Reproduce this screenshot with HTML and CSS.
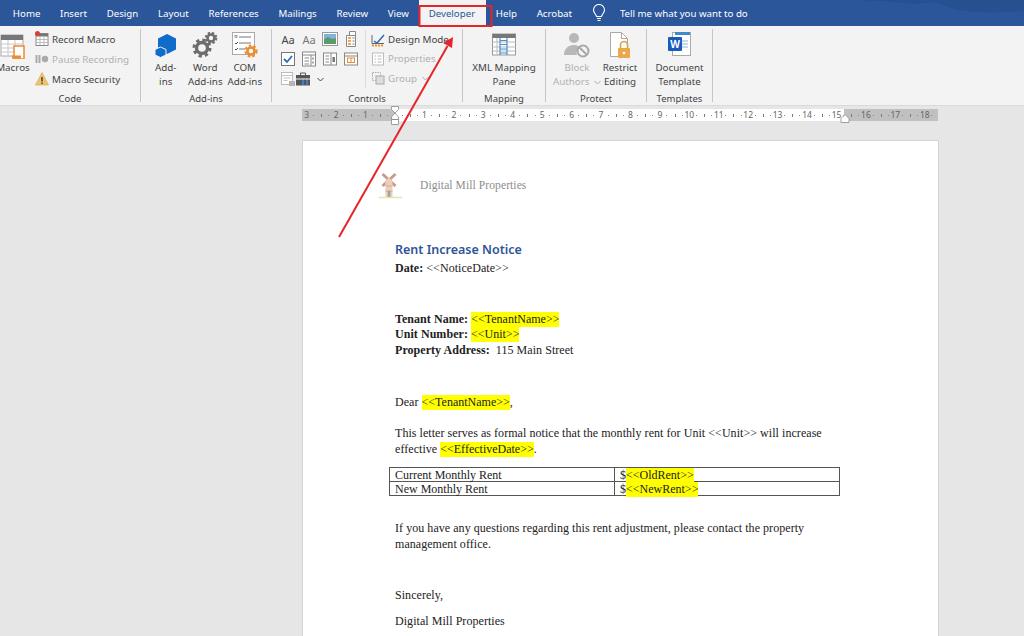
FILE: index.html
```html
<!DOCTYPE html>
<html lang="en">
<head>
    <meta charset="UTF-8">
    <meta name="viewport" content="width=device-width, initial-scale=1.0">
    <title>Rent Increase Notice - Word</title>
    <link rel="stylesheet" href="styles.css">
</head>
<body>
    <!-- tab strip -->
    <nav class="tabs">
        <a class="tab">Home</a>
        <a class="tab">Insert</a>
        <a class="tab">Design</a>
        <a class="tab">Layout</a>
        <a class="tab">References</a>
        <a class="tab">Mailings</a>
        <a class="tab">Review</a>
        <a class="tab">View</a>
        <a class="tab tab-active">Developer</a>
        <a class="tab">Help</a>
        <a class="tab">Acrobat</a>
        <svg class="bulb" width="14" height="18" viewBox="0 0 14 18"><path d="M4.5 12.5C4 10 1.5 9 1.5 6a5.5 5.5 0 0 1 11 0c0 3-2.500 4-3 6.500z" fill="none" stroke="#fff" stroke-width="1.1"/><path d="M5 14.500h4M5.500 16.500h3" stroke="#fff" stroke-width="1.100"/></svg>
        <span class="tell-me">Tell me what you want to do</span>
        <svg class="waves" width="160" height="26" viewBox="0 0 160 26"><path d="M0 2C20-2 40 6 60 3c20-3 20 6 40 8s40 2 60 0V0H0z" fill="#26508f"/></svg>
    </nav>

    <!-- ribbon -->
    <div class="ribbon">
        <section class="group group-code">
            <div class="group-body">
                <div class="big big-macros">
                    <svg class="big-icon" width="28" height="28" viewBox="0 0 28 28"><rect x="1" y="4" width="22" height="21" fill="#fff" stroke="#aaa"/><rect x="1" y="4" width="22" height="5" fill="#777"/><path d="M1 13h22M1 17h22M1 21h22M8 9v16M15 9v16" stroke="#c8c8c8"/><rect x="14" y="15" width="10" height="13" fill="#fff" stroke="#ed8b2f" stroke-width="1.500"/><path d="M12 26h9" stroke="#ed8b2f" stroke-width="3"/></svg>
                    <span>Macros</span>
                </div>
                <div class="small-list">
                    <div class="small">
                        <svg width="14" height="16" viewBox="0 0 14 16"><rect x="1" y="2.500" width="12" height="12" fill="#fff" stroke="#888"/><rect x="1" y="2.500" width="12" height="3" fill="#777"/><path d="M1 8.500h12M1 11.500h12M5 5v9M9 5v9" stroke="#bbb"/><circle cx="2.500" cy="2.500" r="2.500" fill="#d8412f"/></svg>
                        <span>Record Macro</span>
                    </div>
                    <div class="small is-off">
                        <svg width="14" height="16" viewBox="0 0 14 16"><path d="M1.500 4v8M4.500 4v8" stroke="#aaa" stroke-width="2"/><circle cx="10" cy="8" r="3.200" fill="#aaa"/></svg>
                        <span>Pause Recording</span>
                    </div>
                    <div class="small">
                        <svg width="14" height="16" viewBox="0 0 14 16"><path d="M7 1.500 13.500 14H.500z" fill="#f0c36d" stroke="#d9a441" stroke-width=".6"/><path d="M7 6v4.500M7 11.500v1.500" stroke="#444" stroke-width="1.500"/></svg>
                        <span>Macro Security</span>
                    </div>
                </div>
            </div>
            <div class="group-label">Code</div>
        </section>

        <section class="group group-addins">
            <div class="group-body">
                <div class="big big-narrow">
                    <svg class="big-icon" width="24" height="28" viewBox="0 0 24 28"><path d="M13 3l9 4.500v11L13 23l-9-4.500v-11z" fill="#0f6cc8"/><path d="M6.500 16l5.500 2.500V24l-5.500 2.500L1 24v-5.500z" fill="#0f6cc8" stroke="#f3f3f3"/></svg>
                    <span>Add-<br>ins</span>
                </div>
                <div class="big big-narrow">
                    <svg class="big-icon" width="26" height="28" viewBox="0 0 26 28"><circle cx="10" cy="17" r="5.500" fill="none" stroke="#6d6d6d" stroke-width="3.400"/><circle cx="10" cy="17" r="8" fill="none" stroke="#6d6d6d" stroke-width="3" stroke-dasharray="3.300 3"/><circle cx="19" cy="7" r="3.500" fill="none" stroke="#6d6d6d" stroke-width="2.600"/><circle cx="19" cy="7" r="5.300" fill="none" stroke="#6d6d6d" stroke-width="2" stroke-dasharray="2.400 1.800"/></svg>
                    <span>Word<br>Add-ins</span>
                </div>
                <div class="big big-narrow">
                    <svg class="big-icon" width="28" height="28" viewBox="0 0 28 28"><rect x="1.500" y="1.500" width="22" height="22" fill="#fff" stroke="#aaa"/><path d="M8 6h12M8 12h12M8 18h6" stroke="#777"/><rect x="4" y="4.500" width="2" height="2" fill="none" stroke="#777" stroke-width=".7"/><path d="M4 12l1 1 2-2M4 18l1 1 2-2" fill="none" stroke="#4a4a4a"/><circle cx="20" cy="20" r="3.500" fill="none" stroke="#ed8b2f" stroke-width="2.600"/><circle cx="20" cy="20" r="5.500" fill="none" stroke="#ed8b2f" stroke-width="2.200" stroke-dasharray="2.500 2.100"/></svg>
                    <span>COM<br>Add-ins</span>
                </div>
            </div>
            <div class="group-label">Add-ins</div>
        </section>

        <section class="group group-controls">
            <div class="group-body">
                <div class="control-grid">
                    <span class="aa">Aa</span>
                    <span class="aa aa-light">Aa</span>
                    <svg width="16" height="16" viewBox="0 0 16 16"><rect x=".500" y="1.500" width="15" height="13" fill="#fff" stroke="#999"/><rect x="2" y="3" width="12" height="5" fill="#7fb3de"/><path d="M2 8l4-2 4 2 4-1v6H2z" fill="#5c9a6c"/></svg>
                    <svg width="16" height="16" viewBox="0 0 16 16"><path d="M6.500.500h6v4h-6zM3.500 4.500h9v11h-9z" fill="#fff" stroke="#888"/><path d="M5 7h3M5 10h3M5 13h3" stroke="#ed8b2f" stroke-width="1.500"/><path d="M9.500 7h2M9.500 10h2M9.500 13h2" stroke="#777"/></svg>
                    <svg width="16" height="16" viewBox="0 0 16 16"><rect x="1.500" y="1.500" width="13" height="13" fill="#fff" stroke="#777"/><path d="M4 8l3 3 5-6" fill="none" stroke="#2b6cb8" stroke-width="1.800"/></svg>
                    <svg width="16" height="16" viewBox="0 0 16 16"><rect x="1.500" y="1" width="13" height="14" fill="#fff" stroke="#888"/><path d="M1.500 4h13M10 4v11M3.500 7h4.500M3.500 10h4.500M3.500 13h4.500" stroke="#888"/><path d="M12 6.500v2M12 10.500v2" stroke="#555"/></svg>
                    <svg width="16" height="16" viewBox="0 0 16 16"><rect x="1.500" y="2" width="13" height="12" fill="#fff" stroke="#888"/><path d="M9 2v12M3.500 5h3.500M3.500 8h3.500M3.500 11h3.500" stroke="#888"/><rect x="10.500" y="6" width="2.500" height="5" fill="#777"/></svg>
                    <svg width="16" height="16" viewBox="0 0 16 16"><rect x="1.500" y="2" width="13" height="12" fill="#fff" stroke="#888"/><path d="M1.500 5h13" stroke="#888"/><rect x="4.500" y="7" width="7" height="4.500" fill="#fff" stroke="#ed8b2f"/><path d="M8 7v4.500" stroke="#ed8b2f"/></svg>
                    <svg width="16" height="16" viewBox="0 0 16 16"><rect x="1.500" y="1.500" width="11" height="12" fill="#fff" stroke="#bbb"/><path d="M1.500 4.500h11M3.500 7h7M3.500 9.500h4" stroke="#c4c4c4"/><rect x="9" y="10" width="6" height="5" fill="#b5b5b5"/></svg>
                    <span class="tools">
                        <svg width="18" height="16" viewBox="0 0 18 16"><path d="M5.500 4V2h5v2" fill="none" stroke="#555"/><rect x="1" y="4" width="14" height="10.500" fill="#555"/><path d="M8 7v7M12 7v7" stroke="#3d8ad0" stroke-width="1.600"/><path d="M1 8h14" stroke="#f3f3f3"/></svg>
                        <svg class="chev" width="7" height="5" viewBox="0 0 7 5"><path d="M.5 1l3 3 3-3" fill="none" stroke="#444"/></svg>
                    </span>
                </div>
                <div class="small-list small-list-split">
                    <div class="small">
                        <svg width="14" height="16" viewBox="0 0 14 16"><path d="M1 3v8.500h12" fill="none" stroke="#666"/><path d="M3 9l3 2 7-8" fill="none" stroke="#2b6cb8" stroke-width="1.500"/><path d="M1 13.500h12" stroke="#ed8b2f" stroke-width="2" stroke-dasharray="2 1"/></svg>
                        <span>Design Mode</span>
                    </div>
                    <div class="small is-off">
                        <svg width="14" height="16" viewBox="0 0 14 16"><rect x="1.500" y="2" width="11" height="12" fill="#fff" stroke="#bbb"/><path d="M3.500 5h1.500M6.500 5h4M3.500 8h1.500M6.500 8h4M3.500 11h1.500M6.500 11h4" stroke="#bbb"/></svg>
                        <span>Properties</span>
                    </div>
                    <div class="small is-off">
                        <svg width="14" height="16" viewBox="0 0 14 16"><rect x="1.500" y="2.500" width="8" height="8" fill="none" stroke="#aaa" stroke-dasharray="1.500 1"/><rect x="5" y="6" width="8" height="8" fill="#ddd" stroke="#aaa"/></svg>
                        <span>Group</span>
                        <svg class="chev" width="7" height="5" viewBox="0 0 7 5"><path d="M.5 1l3 3 3-3" fill="none" stroke="#aaa"/></svg>
                    </div>
                </div>
            </div>
            <div class="group-label">Controls</div>
        </section>

        <section class="group group-mapping">
            <div class="group-body">
                <div class="big">
                    <svg class="big-icon" width="26" height="28" viewBox="0 0 26 28"><rect x="1.500" y="3" width="23" height="21" fill="#fff" stroke="#999"/><rect x="1.500" y="3" width="23" height="4" fill="#777"/><path d="M1.500 11h23M1.500 16h23M1.500 20h23M6 7v17" stroke="#bbb"/><path d="M9 7v17M9 9.500h7M9 13.500h7M9 18h7M9 22h7M16 7v17" fill="none" stroke="#4a90d0" stroke-width="1.200"/></svg>
                    <span>XML Mapping<br>Pane</span>
                </div>
            </div>
            <div class="group-label">Mapping</div>
        </section>

        <section class="group group-protect">
            <div class="group-body">
                <div class="big big-block is-off">
                    <svg class="big-icon" width="30" height="28" viewBox="0 0 30 28"><circle cx="12" cy="7" r="5" fill="#b8b8b8"/><path d="M2 24c0-6 4-10 10-10 3 0 5 1 6 2-3 2-4 5-3 8z" fill="#b8b8b8"/><circle cx="21" cy="20" r="5.500" fill="none" stroke="#a8a8a8" stroke-width="2"/><path d="M17 16l8 8" stroke="#a8a8a8" stroke-width="2"/></svg>
                    <span>Block<br>Authors <svg class="chev" width="7" height="5" viewBox="0 0 7 5"><path d="M.5 1l3 3 3-3" fill="none" stroke="#aaa"/></svg></span>
                </div>
                <div class="big big-restrict">
                    <svg class="big-icon" width="24" height="28" viewBox="0 0 24 28"><path d="M2.500 1.500h11l6 6v18h-17z" fill="#fff" stroke="#aaa"/><path d="M13.500 1.500v6h6" fill="none" stroke="#aaa"/><rect x="10" y="17" width="12" height="10" rx="1" fill="#e9a94a"/><path d="M12.500 17v-3a3.500 3.500 0 0 1 7 0v3" fill="none" stroke="#d9a441" stroke-width="1.600"/><circle cx="16" cy="22" r="1.300" fill="#fff"/></svg>
                    <span>Restrict<br>Editing</span>
                </div>
            </div>
            <div class="group-label">Protect</div>
        </section>

        <section class="group group-templates">
            <div class="group-body">
                <div class="big">
                    <svg class="big-icon" width="26" height="28" viewBox="0 0 26 28"><rect x="5.500" y="1.500" width="18" height="23" fill="#fff" stroke="#aaa"/><rect x="8" y="1" width="15" height="3" fill="#3d8ad0"/><path d="M15 10h6M15 13h6M15 16h6" stroke="#8ab4de"/><rect x="1" y="6" width="14" height="14" rx="1" fill="#185abd"/><text x="8" y="17" class="word-w">W</text></svg>
                    <span>Document<br>Template</span>
                </div>
            </div>
            <div class="group-label">Templates</div>
        </section>
    </div>

    <!-- document area -->
    <main class="workspace">
        <div class="ruler">
            <span class="mark">3</span><span class="mark">2</span><span class="mark">1</span><span class="mark"></span>
            <span class="mark">1</span><span class="mark">2</span><span class="mark">3</span><span class="mark">4</span><span class="mark">5</span><span class="mark">6</span>
            <span class="mark">7</span><span class="mark">8</span><span class="mark">9</span><span class="mark">10</span><span class="mark">11</span><span class="mark">12</span>
            <span class="mark">13</span><span class="mark">14</span><span class="mark">15</span><span class="mark">16</span><span class="mark">17</span><span class="mark">18</span>
        </div>

        <article class="page">
            <div class="letterhead">
                <svg class="logo" width="26" height="30" viewBox="0 0 26 30"><path d="M3.500 4 16.500 16M16.500 4 3.500 16" stroke="#c99a90" stroke-width="3"/><path d="M10 7 6.500 12v15h7V12z" fill="#eccfb6"/><path d="M6.500 16h7M6.500 21h7" stroke="#d5ad94"/><rect x="8.800" y="21" width="2.500" height="6" fill="#93a3ad"/><path d="M0 27.500h23" stroke="#dfe7b4" stroke-width="1.500"/></svg>
                <span class="company">Digital Mill Properties</span>
            </div>

            <h1 class="title">Rent Increase Notice</h1>
            <p class="line block-date"><b>Date:</b> &lt;&lt;NoticeDate&gt;&gt;</p>

            <div class="block-tenant">
                <p class="line"><b>Tenant Name:</b> <mark>&lt;&lt;TenantName&gt;&gt;</mark></p>
                <p class="line"><b>Unit Number:</b> <mark>&lt;&lt;Unit&gt;&gt;</mark></p>
                <p class="line"><b>Property Address:</b>&nbsp; 115 Main Street</p>
            </div>

            <p class="line block-dear">Dear <mark>&lt;&lt;TenantName&gt;&gt;</mark>,</p>
            <p class="line block-para">This letter serves as formal notice that the monthly rent for Unit &lt;&lt;Unit&gt;&gt; will increase effective <mark>&lt;&lt;EffectiveDate&gt;&gt;</mark>.</p>

            <table class="rent-table">
                <tr>
                    <td>Current Monthly Rent</td>
                    <td>$<mark>&lt;&lt;OldRent&gt;&gt;</mark></td>
                </tr>
                <tr>
                    <td>New Monthly Rent</td>
                    <td>$<mark>&lt;&lt;NewRent&gt;&gt;</mark></td>
                </tr>
            </table>

            <p class="line block-questions">If you have any questions regarding this rent adjustment, please contact the property management office.</p>
            <p class="line block-sincerely">Sincerely,</p>
            <p class="line block-sign">Digital Mill Properties</p>
        </article>
    </main>

    <!-- ruler indent markers, lie over the ruler -->
    <svg class="indent indent-left" width="10" height="20" viewBox="0 0 10 20"><path d="M1.500.500h7v3L5 7 1.500 3.500zM5 7l3.500 4v2.500h-7V11zM1.500 13.500h7v5h-7z" fill="#fff" stroke="#8a8a8a" stroke-width=".8"/></svg>
    <svg class="indent indent-right" width="10" height="9" viewBox="0 0 10 9"><path d="M5 .5l4 4v4H1v-4z" fill="#fff" stroke="#8a8a8a" stroke-width=".8"/></svg>

    <!-- red annotation drawn over the screenshot -->
    <svg class="annotation" width="1024" height="636" viewBox="0 0 1024 636">
        <rect x="419.500" y="6" width="72" height="20" fill="none" stroke="#e5252a" stroke-width="2"/>
        <path d="M339 237 447.500 46" stroke="#e5252a" stroke-width="2"/>
        <path d="M453 37 452 48 443 43z" fill="#e5252a"/>
    </svg>
</body>
</html>
```

FILE: styles.css
```css
html, body {
    margin: 0;
    height: 636px;
    overflow: hidden;
}

body {
    display: flex;
    flex-direction: column;
    font-family: "Noto Sans", "Open Sans", sans-serif;
    background-color: #e6e6e6;
    position: relative;
}

/* tab strip */
.tabs {
    display: flex;
    align-items: center;
    height: 26px;
    padding-left: 3px;
    background-color: #2b579a;
    color: #fff;
    font-size: 9.7px;
    position: relative;
    flex: none;
}

.tab {
    box-sizing: border-box;
    height: 26px;
    padding: 1px 9.85px 0;
    line-height: 26px;
    white-space: nowrap;
}

.tab-active {
    padding-right: 10.85px;
    background-color: #f3f3f3;
    color: #2b579a;
}

.bulb {
    margin-left: 10px;
}

.tell-me {
    margin: 1px 0 0 14px;
}

.waves {
    position: absolute;
    top: 0;
    right: 0;
}

/* ribbon */
.ribbon {
    display: flex;
    height: 80px;
    padding-top: 3px;
    box-sizing: border-box;
    background-color: #f3f3f3;
    border-bottom: 1px solid #dadada;
    color: #444;
    font-size: 9.8px;
    flex: none;
}

.group {
    display: flex;
    flex-direction: column;
    box-sizing: border-box;
    height: 73px;
    border-right: 1px solid #c6c6c6;
    flex: none;
}

.group-code { width: 141px; }
.group-addins { width: 131px; padding-left: 5px; }
.group-controls { width: 191px; padding-left: 8px; }
.group-mapping { width: 83px; }
.group-protect { width: 101px; padding-left: 7px; }
.group-templates { width: 66px; }

.group-body {
    display: flex;
    flex: 1;
    justify-content: flex-start;
}

.group-mapping .group-body,
.group-templates .group-body {
    justify-content: center;
}

/* the label sits a little below the end of the group separator */
.group-label {
    height: 15px;
    margin-bottom: -4px;
    text-align: center;
    font-size: 9.5px;
    line-height: 15px;
}

.group-addins .group-label {
    margin-left: -5px;
}

.group-controls .group-label {
    margin-left: -8px;
}

.group-protect .group-label {
    margin-left: -7px;
}

.big {
    display: flex;
    flex-direction: column;
    align-items: center;
    text-align: center;
    line-height: 14px;
    white-space: nowrap;
}

.big-icon {
    display: block;
    margin: 2px 0;
    flex: none;
}

.big-macros {
    width: 30px;
    margin-left: -2px;
}

.big-macros .big-icon {
    align-self: flex-start;
    margin-left: 2px;
}

.big-narrow {
    width: 39.5px;
}

.big-block {
    width: 48px;
}

.big-restrict {
    width: 38px;
}

.is-off {
    color: #b1b1b1;
}

.small-list {
    display: flex;
    flex-direction: column;
    margin-left: 7px;
}

.small-list-split {
    margin: 1px 0 0 6px;
    padding-left: 5px;
    height: 58px;
    border-left: 1px solid #dcdcdc;
}

.small {
    display: flex;
    align-items: center;
    gap: 3px;
    height: 20px;
    white-space: nowrap;
}

.control-grid {
    display: grid;
    grid-template-columns: repeat(4, 16px);
    grid-auto-rows: 20px;
    column-gap: 5px;
    align-items: center;
    justify-items: center;
}

.aa {
    font-size: 11px;
    color: #444;
}

.aa-light {
    color: #777;
}

.tools {
    display: flex;
    align-items: center;
    gap: 2px;
}

.chev {
    margin-left: 2px;
    flex: none;
}

.word-w {
    font-size: 10px;
    font-weight: bold;
    fill: #fff;
    text-anchor: middle;
}

/* ruler and page */
.workspace {
    flex: 1;
    padding: 3px 85px 0 302px;
    overflow: hidden;
}

.ruler {
    display: flex;
    width: 636px;
    height: 12px;
    overflow: hidden;
    background: linear-gradient(to right, #c0c0c0 93px, #fff 93px, #fff 542px, #c0c0c0 542px);
    color: #666;
    font-size: 8.5px;
    line-height: 12px;
}

.mark {
    flex: none;
    width: 29.45px;
    text-align: center;
    background:
        linear-gradient(#777, #777) 0 50% / 1px 3px no-repeat,
        linear-gradient(#888, #888) 25% 50% / 1px 1px no-repeat,
        linear-gradient(#888, #888) 75% 50% / 1px 1px no-repeat;
}

.mark:first-child {
    margin-left: -10.1px;
}

.page {
    box-sizing: border-box;
    width: 637px;
    height: 520px;
    margin-top: 19px;
    padding: 29px 100px 0 92px;
    background-color: #fff;
    border: 1px solid #d4d4d4;
    border-bottom: none;
    color: #222;
    font-family: "Liberation Serif", serif;
    font-size: 12px;
}

.letterhead {
    display: flex;
    align-items: center;
    height: 30px;
    margin-left: -16px;
}

.company {
    margin-left: 15px;
    color: #8c8c8c;
    font-size: 11.5px;
    letter-spacing: .1px;
}

.title {
    margin: 41px 0 0;
    color: #2f5496;
    font-family: "Noto Sans", sans-serif;
    font-size: 12.5px;
    font-weight: 600;
    line-height: 18px;
}

.line {
    margin: 0;
    line-height: 15.6px;
    letter-spacing: .05px;
}

mark {
    padding-bottom: 1px;
    background-color: #ff0;
    color: inherit;
    letter-spacing: 0;
}

.block-date { margin-top: 2px; }
.block-tenant { margin-top: 35px; }
.block-dear { margin-top: 37px; }
.block-para { margin-top: 15px; }
.block-questions { margin-top: 25px; }
.block-sincerely { margin-top: 36px; }
.block-sign { margin-top: 10px; }

.rent-table {
    width: 451px;
    margin: 10px 0 0 -6px;
    border-collapse: collapse;
    table-layout: fixed;
    line-height: 12px;
}

.rent-table td {
    border: 1px solid #555;
    padding: 1px 0 0 5px;
}

/* overlays */
.indent {
    position: absolute;
}

.indent-left {
    left: 390px;
    top: 106px;
}

.indent-right {
    left: 840px;
    top: 114px;
}

.annotation {
    position: absolute;
    top: 0;
    left: 0;
    pointer-events: none;
}
```
